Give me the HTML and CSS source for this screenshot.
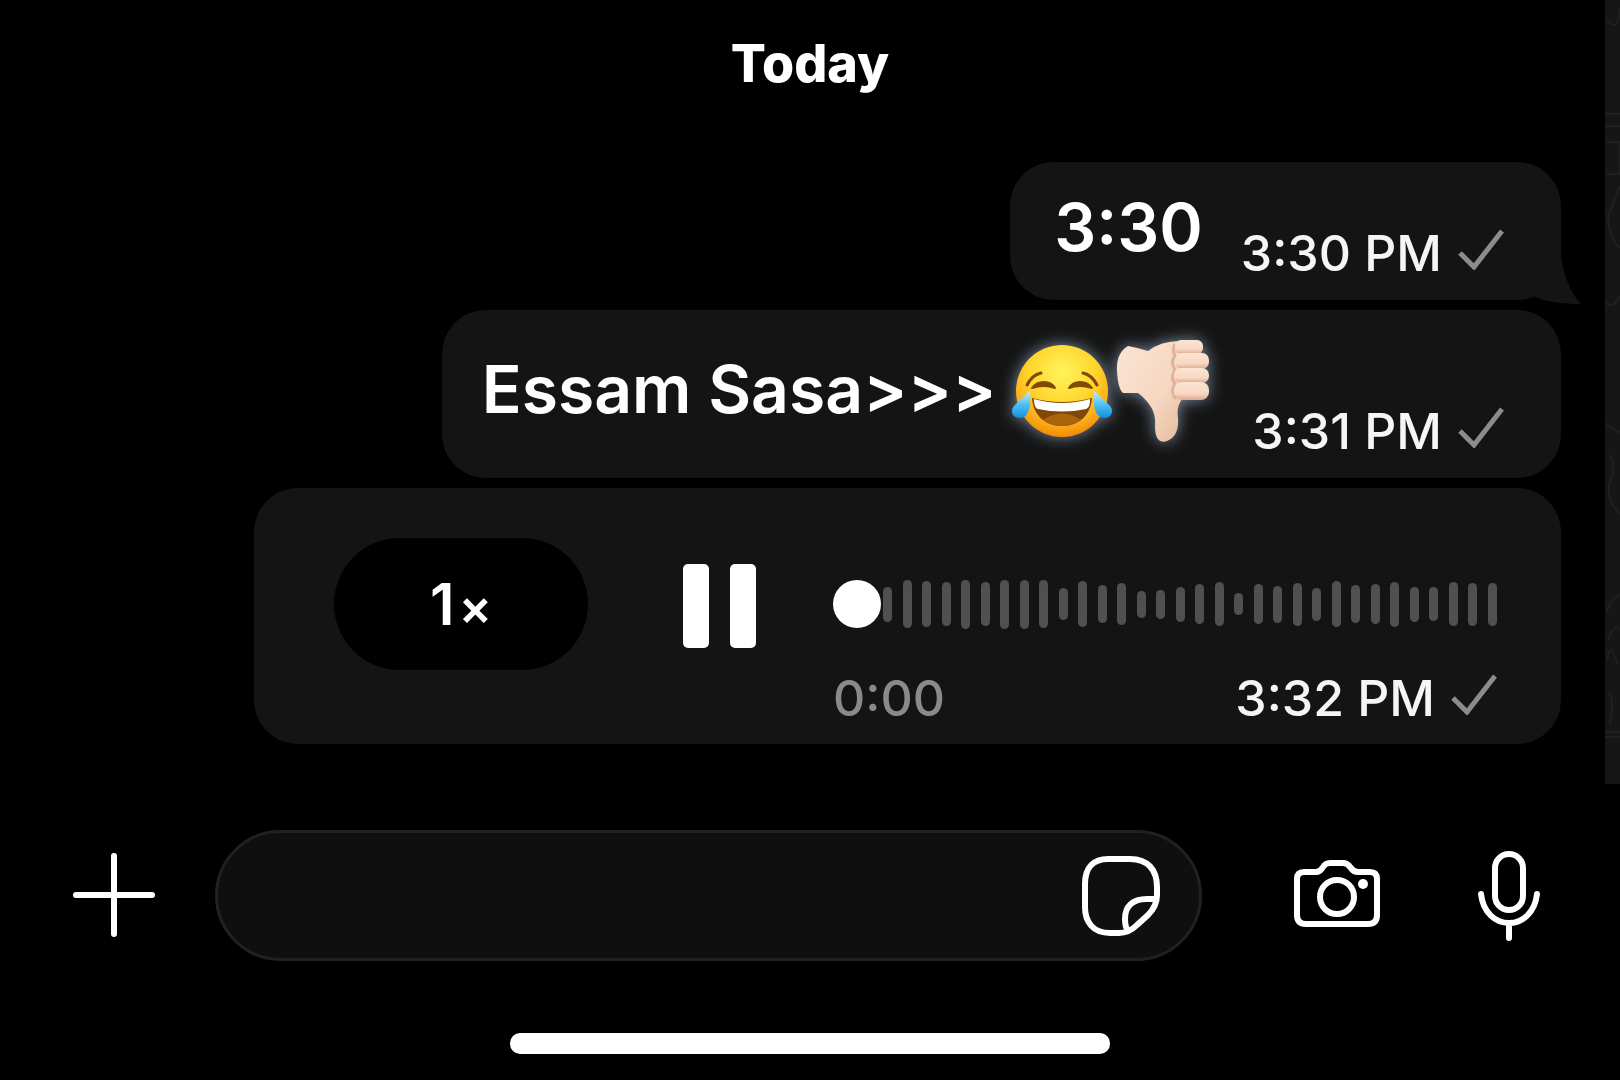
FILE: index.html
```html
<!DOCTYPE html>
<html lang="en">
<head>
<meta charset="utf-8">
<meta name="viewport" content="width=device-width, initial-scale=1">
<title>Chat</title>
<link rel="stylesheet" href="styles.css">
</head>
<body>
<main class="chat">
  <section class="thread">
    <h1 class="day">Today</h1>

    <article class="bubble bubble-short">
      <p class="text">3:30</p>
      <p class="meta"><time>3:30 PM</time>
        <svg class="check" viewBox="0 0 46 42" role="img" aria-label="Sent"><path d="M2 25 16 39 44 3"/></svg>
      </p>
      <svg class="tail" viewBox="0 0 62 64" aria-hidden="true"><path d="M40 0C40 24 47 49 61 64 42 64 26 62 13 56L0 60Z"/></svg>
    </article>

    <article class="bubble bubble-emoji">
      <p class="text">Essam Sasa&gt;&gt;&gt;</p>
      <svg class="emoji" viewBox="0 0 202 112" role="img" aria-label="Face with tears of joy, thumbs down">
        <defs>
          <radialGradient id="face" cx=".5" cy=".3" r=".72">
            <stop offset="0" stop-color="#fff45c"/><stop offset=".5" stop-color="#ffd52e"/><stop offset=".8" stop-color="#fbab17"/><stop offset="1" stop-color="#ef8606"/>
          </radialGradient>
          <linearGradient id="tear" x1="0" y1="0" x2="0" y2="1">
            <stop offset="0" stop-color="#c4efff"/><stop offset=".5" stop-color="#4fc0f4"/><stop offset="1" stop-color="#1191e0"/>
          </linearGradient>
          <linearGradient id="skin" x1="0" y1="0" x2="1" y2="1">
            <stop offset="0" stop-color="#fbe5d4"/><stop offset=".6" stop-color="#f6d7c1"/><stop offset="1" stop-color="#e5b99d"/>
          </linearGradient>
          <linearGradient id="finger" x1="0" y1="0" x2="0" y2="1">
            <stop offset="0" stop-color="#fbe4d3"/><stop offset=".65" stop-color="#f7d8c3"/><stop offset="1" stop-color="#dba88d"/>
          </linearGradient>
        </defs>
        <circle cx="55" cy="55" r="46" fill="url(#face)"/>
        <path d="M25 62Q55 70 85 62C84 79 72 90 55 90S26 79 25 62Z" fill="#804708"/>
        <path d="M36 84Q55 71 74 84Q66 90 55 90T36 84Z" fill="#a9640c"/>
        <path d="M27 63Q55 71 83 63C83 69 82 72 79 73Q55 78 31 73C28 72 27 68 27 63Z" fill="#fff"/>
        <g fill="none" stroke="#824a05" stroke-linecap="round">
          <path d="M20 49Q25 39 34 37M90 49Q85 39 76 37" stroke-width="3"/>
        </g>
        <path d="M25 52C31 44 43 44 48 52Q37 48 25 52ZM62 52C67 44 79 44 85 52Q73 48 62 52Z" fill="#824a05" stroke="#824a05" stroke-width="2" stroke-linejoin="round"/>
        <path d="M23 55C24 67 23 82 13 82 5 82 3 75 7 70Q13 64 23 55ZM87 55C86 67 87 82 97 82 105 82 107 75 103 70Q97 64 87 55Z" fill="url(#tear)"/>
        <path d="M121 10Q109 17 110 35T116 57L131 57Q139 63 144 71T148 90C148 106 155 107 160 105 168 102 172 94 171 82Q169 70 176 62L176 5Q155 4 141 15Q132 12 121 10Z" fill="url(#skin)"/>
        <path d="M168 8Q165 14 168 20Q163 26 168 34Q163 41 168 48Q163 55 169 63" fill="none" stroke="#dfb297" stroke-width="3"/>
        <g fill="url(#finger)">
          <rect x="168" y="4" width="28" height="14" rx="6"/>
          <rect x="168" y="17" width="34" height="16" rx="7"/>
          <rect x="167" y="32" width="35" height="15" rx="7"/>
          <rect x="167" y="46" width="35" height="18" rx="8"/>
        </g>
      </svg>
      <p class="meta"><time>3:31 PM</time>
        <svg class="check" viewBox="0 0 46 42" role="img" aria-label="Sent"><path d="M2 25 16 39 44 3"/></svg>
      </p>
    </article>

    <article class="bubble bubble-voice">
      <button class="speed" type="button">1<span>×</span></button>
      <button class="pause" type="button" aria-label="Pause"><span></span><span></span></button>
      <div class="wave">
        <span style="height:35px"></span><span style="height:48px"></span><span style="height:46px"></span><span style="height:44px"></span><span style="height:49px"></span><span style="height:44px"></span><span style="height:49px"></span><span style="height:49px"></span>
        <span style="height:48px"></span><span style="height:32px"></span><span style="height:46px"></span><span style="height:38px"></span><span style="height:42px"></span><span style="height:27px"></span><span style="height:29px"></span><span style="height:35px"></span>
        <span style="height:40px"></span><span style="height:44px"></span><span style="height:22px"></span><span style="height:40px"></span><span style="height:37px"></span><span style="height:43px"></span><span style="height:33px"></span><span style="height:46px"></span>
        <span style="height:38px"></span><span style="height:40px"></span><span style="height:45px"></span><span style="height:35px"></span><span style="height:34px"></span><span style="height:44px"></span><span style="height:43px"></span><span style="height:43px"></span>
        <input class="seek" type="range" min="0" max="100" value="0" aria-label="Playback position">
      </div>
      <div class="voice-foot">
        <span class="elapsed">0:00</span>
        <p class="meta"><time>3:32 PM</time>
          <svg class="check" viewBox="0 0 46 42" role="img" aria-label="Sent"><path d="M2 25 16 39 44 3"/></svg>
        </p>
      </div>
    </article>
  </section>

  <svg class="wallpaper" viewBox="0 0 15 784" preserveAspectRatio="xMaxYMin slice" aria-hidden="true">
    <path d="M2 20Q14 34 15 8M0 114h15M0 126h15M2 142h13v32H2M15 186L3 216Q4 240 15 248M0 300Q7 312 15 296M1 424Q9 430 15 432M4 455Q12 464 5 482Q0 500 15 514M2 612Q4 600 15 594M3 640Q10 622 15 630M2 660Q6 638 12 664M4 692Q10 702 5 724M0 732h15M0 737h15"/>
  </svg>
</main>

<footer class="composer">
  <button class="icon" type="button" aria-label="Attach">
    <svg class="plus" viewBox="0 0 84 86"><path d="M42 3V81M4 42H80"/></svg>
  </button>
  <div class="field">
    <input class="message" type="text" aria-label="Message">
    <button class="icon" type="button" aria-label="Stickers">
      <svg class="sticker" viewBox="0 0 80 82"><path d="M27 4H49C67 4 76 15 76 32V40C76 47 73 54 67 60L56 70C51 75 45 78 38 78H29C12 78 4 67 4 52V29C4 12 13 4 27 4ZM75 44H66C51 44 44 52 44 64Q44 72 47 76"/></svg>
    </button>
  </div>
  <button class="icon camera-button" type="button" aria-label="Camera">
    <svg class="camera" viewBox="0 0 88 74"><path d="M11 13H23C31 13 28 4 37 4H50C59 4 56 13 65 13H77Q84 13 84 20V56Q84 65 75 65H13Q4 65 4 56V20Q4 13 11 13Z"/><circle cx="44" cy="38" r="17"/><circle class="dot" cx="70" cy="25" r="5"/></svg>
  </button>
  <button class="icon mic-button" type="button" aria-label="Record voice message">
    <svg class="mic" viewBox="0 0 62 90"><rect x="17" y="3" width="28" height="56" rx="14"/><path d="M3 43C5 61 17 72 31 72S57 61 59 43M31 72V87"/></svg>
  </button>
</footer>

<div class="home"></div>
</body>
</html>
```
FILE: styles.css
```css
* {
  box-sizing: border-box;
}

body {
  margin: 0;
  background: #000;
  color: #fff;
  font-family: Inter, "Liberation Sans", sans-serif;
}

h1, p {
  margin: 0;
}

button, input {
  padding: 0;
  border: 0;
  background: none;
  color: inherit;
  font-family: inherit;
}

svg {
  display: block;
  flex: none;
}

.chat {
  display: grid;
  grid-template-columns: 15px 1fr 15px;
}

.wallpaper {
  grid-column: 3;
  width: 100%;
  height: 100%;
  background: #161616;
  fill: none;
  stroke: #202020;
  stroke-width: 2;
}

.thread {
  grid-column: 2;
  display: flex;
  flex-direction: column;
  gap: 10px;
  padding: 32px 44px 40px 239px;
}

.day {
  margin: 0 -44px 56px -239px;
  text-align: center;
  font-size: 52px;
  line-height: 64px;
  font-weight: 800;
}

.bubble {
  position: relative;
  border-radius: 44px;
  background: #141414;
}

.bubble-short, .bubble-emoji {
  display: flex;
  align-self: flex-end;
  padding: 26px 57px 18px 44px;
}

.bubble-short {
  gap: 38px;
  min-height: 138px;
}

.bubble-emoji {
  padding-left: 40px;
  min-height: 168px;
}

.text {
  font-size: 66px;
  line-height: 78px;
  font-weight: 600;
  white-space: nowrap;
}

.bubble-emoji .text {
  margin-top: 14px;
}

.emoji {
  width: 202px;
  height: 112px;
  margin: 0 43px 0 11px;
  filter: drop-shadow(0 0 8px #7b8ca0);
}

.meta {
  display: flex;
  align-items: center;
  align-self: flex-end;
  gap: 16px;
  font-size: 50px;
  line-height: 58px;
  font-weight: 500;
  color: #f5f5f5;
  white-space: nowrap;
}

.check {
  width: 46px;
  height: 42px;
  margin-bottom: 8px;
  fill: none;
  stroke: #8c8c8c;
  stroke-width: 5;
}

.tail {
  position: absolute;
  right: -21px;
  bottom: -4px;
  width: 62px;
  height: 64px;
  fill: #141414;
}

.bubble-voice {
  display: grid;
  grid-template-columns: auto auto 1fr;
  padding: 50px 64px 18px 80px;
}

.speed {
  width: 254px;
  height: 132px;
  margin-right: 95px;
  border-radius: 66px;
  background: #000;
  font-size: 58px;
  font-weight: 600;
}

.speed span {
  margin-left: 4px;
  font-size: 50px;
}

.pause {
  display: flex;
  align-items: center;
  gap: 21px;
  margin-right: 77px;
  padding-top: 4px;
}

.pause span {
  width: 26px;
  height: 84px;
  border-radius: 5px;
  background: #fff;
}

.wave {
  position: relative;
  display: flex;
  align-items: center;
  justify-content: space-between;
  padding-left: 50px;
}

.wave span {
  width: 9px;
  border-radius: 5px;
  background: #505050;
}

.seek {
  position: absolute;
  inset: 0;
  width: 100%;
  height: 100%;
  margin: 0;
  appearance: none;
}

.seek::-webkit-slider-thumb {
  appearance: none;
  width: 48px;
  height: 48px;
  border-radius: 50%;
  background: #fff;
}

.voice-foot {
  grid-column: 3;
  display: flex;
  justify-content: space-between;
  height: 56px;
}

.voice-foot .meta {
  line-height: 56px;
}

.elapsed {
  font-size: 50px;
  line-height: 56px;
  font-weight: 500;
  color: #8a8a8a;
}

.composer {
  display: flex;
  align-items: center;
  padding: 46px 80px 0 72px;
}

.icon {
  flex: none;
}

.icon svg {
  fill: none;
  stroke: #fff;
  stroke-width: 6;
  stroke-linecap: round;
  stroke-linejoin: round;
}

.plus {
  width: 84px;
  height: 86px;
}

.field {
  flex: 1;
  display: flex;
  align-items: center;
  height: 131px;
  min-width: 0;
  margin: 0 91px 0 59px;
  padding: 0 38px 0 48px;
  border: 3px solid #212121;
  border-radius: 66px;
  background: #0f0f0f;
}

.message {
  flex: 1;
  min-width: 0;
  height: 100%;
  outline: 0;
  font-size: 50px;
}

.sticker {
  width: 80px;
  height: 82px;
}

.camera {
  width: 88px;
  height: 74px;
}

.icon .dot {
  fill: #fff;
  stroke: none;
}

.mic-button {
  margin-left: 97px;
}

.mic {
  width: 62px;
  height: 90px;
}

.home {
  width: 600px;
  max-width: 80%;
  height: 21px;
  margin: 72px auto 26px;
  border-radius: 10px;
  background: #fff;
}
```
